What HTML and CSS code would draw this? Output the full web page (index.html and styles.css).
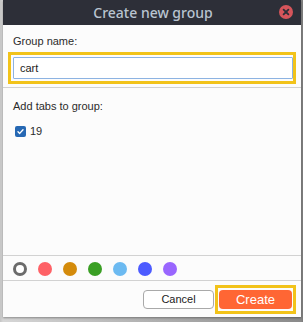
FILE: index.html
```html
<!DOCTYPE html>
<html lang="en">
<head>
    <meta charset="UTF-8">
    <meta name="viewport" content="width=device-width, initial-scale=1.0">
    <title>Create new group</title>
    <link rel="stylesheet" href="styles.css">
</head>
<body>
<div class="window">
    <div class="titlebar">
        <span class="title">Create new group</span>
        <button class="close" title="Close">
            <svg width="14" height="14" viewBox="0 0 14 14">
                <circle cx="7" cy="7" r="7" fill="#d6555b"/>
                <path d="M4.6 4.6 L9.4 9.4 M9.4 4.6 L4.6 9.4" stroke="#2d2f38" stroke-width="1.8" stroke-linecap="round"/>
            </svg>
        </button>
    </div>

    <div class="section name-section">
        <label class="label" for="groupName">Group name:</label>
        <div class="highlight">
            <input type="text" id="groupName" value="cart">
        </div>
    </div>

    <div class="section tabs-section">
        <div class="label">Add tabs to group:</div>
        <label class="tab-row">
            <span class="check">
                <svg width="11" height="11" viewBox="0 0 11 11">
                    <rect width="11" height="11" rx="2" fill="#2668b3"/>
                    <path d="M3 5.8 L4.7 7.4 L8 3.8" stroke="#fff" stroke-width="1.4" fill="none" stroke-linecap="round" stroke-linejoin="round"/>
                </svg>
            </span>
            <span>19</span>
        </label>
    </div>

    <div class="section colors">
        <span class="dot none"></span>
        <span class="dot red"></span>
        <span class="dot orange"></span>
        <span class="dot green"></span>
        <span class="dot sky"></span>
        <span class="dot blue"></span>
        <span class="dot purple"></span>
    </div>

    <div class="footer">
        <button class="btn cancel">Cancel</button>
        <div class="btn-highlight">
            <button class="btn create">Create</button>
        </div>
    </div>
</div>
</body>
</html>
```

FILE: styles.css
```css
html {
    height: 100%;
}
body {
    margin: 0;
    height: 100%;
    background: linear-gradient(90deg, #c4c4c4 0px, #d6d6d6 3px, #8a8a8a 301px, #7a7a7a 303px);
    font-family: 'Liberation Sans', Arial, sans-serif;
    font-size: 11px;
    color: #2b2b2b;
    overflow: hidden;
}
.window {
    margin-left: 3px;
    width: 298px;
    height: 317px;
    background-color: #fcfcfc;
    display: flex;
    flex-direction: column;
    box-shadow: 0 1px 2px rgba(0,0,0,0.35);
}
.titlebar {
    height: 25px;
    background-color: #2d2f38;
    display: flex;
    align-items: center;
    justify-content: center;
    position: relative;
}
.title {
    font-family: 'Noto Sans', 'DejaVu Sans', sans-serif;
    font-size: 14px;
    font-weight: 500;
    color: #b9c4d0;
    margin-left: 2px;
}
.close {
    position: absolute;
    right: 8px;
    top: 5px;
    width: 14px;
    height: 14px;
    padding: 0;
    border: none;
    background: none;
    display: flex;
}
.section {
    border-bottom: 1px solid #d2d2d2;
}
.label {
    display: block;
    padding-left: 10px;
    line-height: 13px;
}
.name-section {
    padding: 10px 5px 3px 5px;
}
.name-section .label {
    padding-left: 5px;
    margin-bottom: 4px;
}
.highlight {
    border: 3px solid #f2c31a;
    padding: 2px 0 2px 2px;
}
input {
    display: block;
    width: 100%;
    height: 22px;
    box-sizing: border-box;
    border: 1px solid #8db3e2;
    border-radius: 1px;
    padding: 0 6px;
    font-family: 'Liberation Sans', Arial, sans-serif;
    font-size: 11px;
    color: #222;
    background-color: #fff;
    outline: none;
}
.tabs-section {
    flex: 1;
    padding: 12px 0 0 0;
}
.tab-row {
    display: flex;
    align-items: center;
    gap: 4px;
    padding-left: 12px;
    margin-top: 12px;
    font-size: 11px;
}
.check {
    display: flex;
}
.colors {
    display: flex;
    align-items: center;
    gap: 11px;
    height: 25px;
    padding-left: 10px;
    padding-top: 1px;
    box-sizing: border-box;
}
.dot {
    width: 14px;
    height: 14px;
    border-radius: 50%;
    box-sizing: border-box;
}
.dot.none {
    border: 3px solid #6b6b6b;
    background-color: #fff;
}
.dot.red { background-color: #fe6166; }
.dot.orange { background-color: #d48b0b; }
.dot.green { background-color: #3a9f24; }
.dot.sky { background-color: #6cbaf1; }
.dot.blue { background-color: #4c5bff; }
.dot.purple { background-color: #9966fe; }
.footer {
    flex: 0 0 36px;
    display: flex;
    align-items: center;
    justify-content: flex-end;
    padding-right: 5px;
    gap: 1px;
}
.btn {
    height: 19px;
    border-radius: 4px;
    font-family: 'Liberation Sans', Arial, sans-serif;
    cursor: pointer;
    padding: 0;
}
.cancel {
    width: 71px;
    background-color: #fff;
    border: 1px solid #a9a9a9;
    font-size: 11px;
    color: #222;
}
.btn-highlight {
    border: 3px solid #f2c31a;
    padding: 2px 1px;
    display: flex;
}
.create {
    width: 73px;
    background-color: #ff6634;
    border: none;
    color: #fff;
    font-size: 13px;
}
```
